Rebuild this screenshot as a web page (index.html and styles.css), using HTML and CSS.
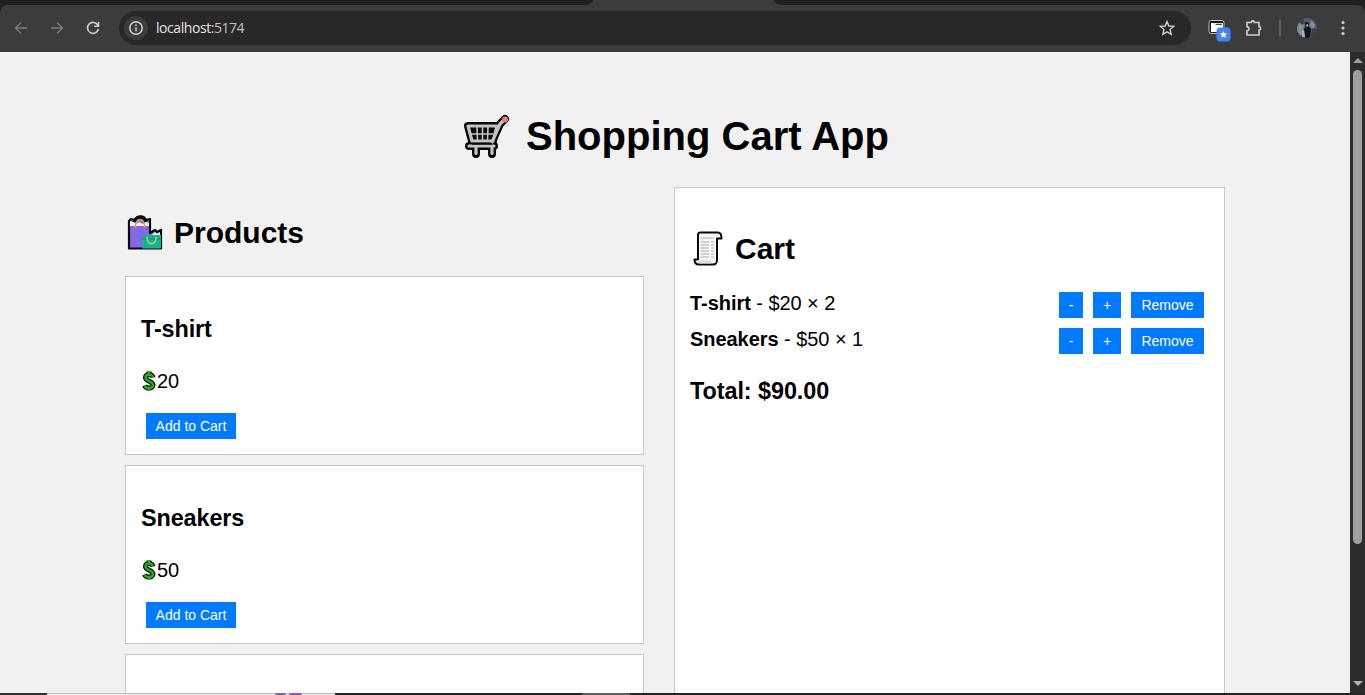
FILE: index.html
```html
<!DOCTYPE html>
<html lang="en">
<head>
<meta charset="utf-8">
<title>Shopping Cart App</title>
<link rel="stylesheet" href="styles.css">
</head>
<body>
<div class="window">
  <header class="browser">
    <div class="tabstrip"><span class="tabs-left"></span><span class="active-tab"></span><span class="tabs-right"></span></div>
    <div class="toolbar">
      <svg class="nav dim" viewBox="0 0 16 16"><path d="M14 8H2.500M8 2.500 2.500 8 8 13.500"/></svg>
      <svg class="nav dim" viewBox="0 0 16 16"><path d="M2 8h11.500M8 2.500 13.500 8 8 13.500"/></svg>
      <svg class="nav" viewBox="0 0 16 16"><path d="M13 5.500A5.500 5.500 0 1 0 13.400 9M13.500 2v4.300H9.200"/></svg>
      <div class="address">
        <span class="site-info"><svg viewBox="0 0 16 16"><circle cx="8" cy="8" r="6.200"/><path d="M8 7.300v4M8 4.500v1.600"/></svg></span>
        <span class="url">localhost<span class="port">:5174</span></span>
        <svg class="star" viewBox="0 0 16 16"><path d="M8 1.600 9.900 6l4.800.4-3.600 3.200 1.100 4.700L8 11.800l-4.200 2.500 1.100-4.700L1.300 6.400 6.100 6Z"/></svg>
      </div>
      <svg class="extension" viewBox="0 0 24 24"><rect x="1" y="4.500" width="15" height="13" rx="2" fill="#151515" stroke="#bdbdbd"/><path d="M3 7h12v9H3z" fill="#fff"/><path d="M7.500 8.300H14" stroke="#151515" stroke-width="1"/><rect x="8.500" y="11.500" width="14" height="14" rx="3.500" fill="#4285f4"/><path d="m15.500 15 1.100 2.400 2.700.2-2.100 1.800.6 2.600-2.300-1.400-2.300 1.400.6-2.600-2.100-1.800 2.700-.2z" fill="#fff"/></svg>
      <svg class="puzzle" viewBox="0 0 18 18"><path d="M2 3.500h4.200c0-2.200 3.200-2.200 3.200 0H14v4.300c2.200 0 2.200 3.200 0 3.200V16H2v-4.300c2.700-.3 2.700-3.700 0-4Z"/></svg>
      <span class="divider"></span>
      <svg class="avatar" viewBox="0 0 20 20"><defs><clipPath id="face"><circle cx="10" cy="10" r="10"/></clipPath></defs><g clip-path="url(#face)"><path fill="#596069" d="M0 0h20v20H0z"/><path fill="#858e98" d="M0 8l4-5 3 4-1 9-6 3zM14 2l4 5-2 5-3-4z"/><path fill="#3b414a" d="M1 3l5-3 2 5-3 2zM15 10l5 1v8h-6z"/><path fill="#10151f" d="M8 5c1-2 4-1 4 1l-.5 2.500L14 11l-1 9H8l-1-9 1.800-2z"/><path fill="#b0b3b5" d="M9 7l2-1 .4 2-1.600 1zM5 13l2-1 1 7H5z"/></g></svg>
      <svg class="more" viewBox="0 0 4 16"><circle cx="2" cy="2.500" r="1.600"/><circle cx="2" cy="8" r="1.600"/><circle cx="2" cy="13.500" r="1.600"/></svg>
    </div>
  </header>
  <div class="viewport">
    <main class="app">
      <h1><svg class="cart-icon" viewBox="0 0 46 46"><g fill="none" stroke-linecap="round" stroke-linejoin="round"><path d="M4 12h29l-4 15H8zM28 28 36 10l5-5M5 32h25M12 36v4M28 36v4" stroke="#080808" stroke-width="8"/><path d="M28 28 30 32" stroke="#080808" stroke-width="7"/><path d="M4 12h29l-4 15H8zM28 28 36 10l5-5M5 32h25M12 34v5.500M28 34v5.500" stroke="#c3c3c3" stroke-width="3.200"/></g><path d="M7 14h23.500l-3 11H10z" fill="#0a0a0a"/><path d="M7 20h22M13 13l.5 13M18.500 13v13M24 13l-.5 13" stroke="#c3c3c3" stroke-width="1.600"/><path d="M8 29.700h20" stroke="#080808" stroke-width="1.800"/><circle cx="41" cy="5.500" r="3" fill="#f17b6c"/></svg><span>Shopping Cart App</span></h1>
      <div class="columns">
        <section class="products">
          <h2><svg class="bags-icon" viewBox="0 0 36 36"><path d="M2 6 4 4l4 1c2-5 9-5 11 0l4-1v14l5-3 2 2 4-2v18.500H2z" fill="#8568e3" stroke="#080808" stroke-width="2.200" stroke-linejoin="round"/><path d="M7.500 7C8 .5 18 .5 18.500 7" fill="none" stroke="#080808" stroke-width="3"/><path d="M3 9V6l3 1 3 2 3-2 4 2 3-2 3 1v3H3zM24 21l4-4 2 2 3-2v5h-9z" fill="#f2f2f2"/><path d="M8.500 13C7 2 19 2 17.500 13" fill="none" stroke="#dca52d" stroke-width="1.500"/><path d="M15.500 20H34v13.500H15.500z" fill="#16b294"/><path d="M15.500 24H34" stroke="#078f7b" stroke-width="1"/><path d="M20 22c0 9 9 9 9 0" fill="none" stroke="#cfd53d" stroke-width="1.500"/></svg><span>Products</span></h2>
          <article class="card">
            <h3>T-shirt</h3>
            <p><svg class="dollar" viewBox="0 0 14 24"><path d="M7 2.500v3M7 18.500v3M11 8.500C10 4.500 3.500 4.500 3.500 8.500S11 12 11 16s-7 4-8.500.5" fill="none" stroke="#060b05" stroke-width="5"/><path d="M7 2.500v3M7 18.500v3M10.700 8C10 4.700 3.500 4.700 3.500 8.500S11 12 11 16s-7 4-8.200 1" fill="none" stroke="#25aa20" stroke-width="2.600"/></svg>20</p>
            <button class="add">Add to Cart</button>
          </article>
          <article class="card">
            <h3>Sneakers</h3>
            <p><svg class="dollar" viewBox="0 0 14 24"><path d="M7 2.500v3M7 18.500v3M11 8.500C10 4.500 3.500 4.500 3.500 8.500S11 12 11 16s-7 4-8.500.5" fill="none" stroke="#060b05" stroke-width="5"/><path d="M7 2.500v3M7 18.500v3M10.700 8C10 4.700 3.500 4.700 3.500 8.500S11 12 11 16s-7 4-8.200 1" fill="none" stroke="#25aa20" stroke-width="2.600"/></svg>50</p>
            <button class="add">Add to Cart</button>
          </article>
          <article class="card"></article>
        </section>
        <section class="cart">
          <h2><svg class="receipt" viewBox="0 0 30 36"><path d="M7 1.500h18c3 0 3.500 3 3.500 6H24v21c0 4-1 5-4 5H6c-3.500 0-4.500-2-4.500-5H5V6c0-3 0-4.500 2-4.500" fill="#f5f5f5" stroke="#080808" stroke-width="2" stroke-linejoin="round"/><path d="M8 7h13M8 11h8M18 11h3M8 14h8M18 14h3M8 17h8M18 17h3M8 20h8M18 20h3M8 23h8M18 23h3M8 26h8M18 26h3" stroke="#b0b0b0" stroke-width="1.200"/><path d="M4 29.500h14v3H7z" fill="#ddd"/></svg><span>Cart</span></h2>
          <div class="line"><span><b>T-shirt</b> - $20 × 2</span><div class="actions"><button class="minus">-</button><button class="plus">+</button><button class="remove">Remove</button></div></div>
          <div class="line"><span><b>Sneakers</b> - $50 × 1</span><div class="actions"><button class="minus">-</button><button class="plus">+</button><button class="remove">Remove</button></div></div>
          <h3 class="total">Total: $90.00</h3>
        </section>
      </div>
    </main>
    <div class="scrollbar"><i class="up"></i><i class="thumb"></i><i class="down"></i></div>
  </div>
  <footer class="taskbar"><i class="task-dark"></i><i class="status"><i class="violet"></i><i class="purple"></i></i><i class="task-gap"></i><i class="task-light"></i></footer>
</div>
</body>
</html>
```
FILE: styles.css
```css
* { box-sizing: border-box; }
body { margin: 0; overflow: hidden; font: 20px/24px "Liberation Sans", Arial, sans-serif; color: #000; }
.window { width: 1365px; height: 695px; display: flex; flex-direction: column; }
svg { display: block; flex: none; overflow: visible; }
.browser { height: 52px; flex: none; background: #202020; }
.tabstrip { height: 5px; display: flex; background: #3c3c3c; }
.tabs-left { width: 593px; background: #202020; border-bottom-right-radius: 8px 5px; }
.active-tab { width: 181px; }
.tabs-right { flex: 1; background: #202020; border-bottom-left-radius: 8px 5px; }
.toolbar { height: 47px; display: flex; align-items: center; padding: 0 0 1px 13px; background: #3c3c3c; border-radius: 8px 8px 0 0; }
.nav { width: 16px; height: 16px; margin-right: 20px; fill: none; stroke: #d0d0d0; stroke-width: 1.6; }
.nav.dim { stroke: #7b7b7b; stroke-width: 1.4; }
.address { width: 1072px; height: 34px; margin-left: -2px; border-radius: 17px; background: #282828; display: flex; align-items: center; padding: 0 16px 0 5px; }
.site-info { width: 24px; height: 24px; border-radius: 50%; background: #3c3c3c; display: grid; place-items: center; }
.site-info svg { width: 16px; fill: none; stroke: #ddd; stroke-width: 1.4; }
.url { margin-left: 8px; font: 14px/20px "Open Sans", sans-serif; letter-spacing: -.44px; color: #e3e3e3; flex: 1; }
.port { color: #c2c2c2; }
.star { width: 16px; fill: none; stroke: #d0d0d0; stroke-width: 1.4; }
.extension { width: 24px; height: 24px; margin-left: 17px; }
.puzzle { width: 18px; height: 18px; margin-left: 13px; fill: none; stroke: #d0d0d0; stroke-width: 1.6; }
.divider { width: 2px; height: 16px; margin-left: 16px; background: #606060; }
.avatar { width: 20px; height: 20px; margin-left: 16px; }
.more { width: 4px; height: 16px; margin-left: 24px; fill: #d0d0d0; }
.viewport { flex: 1; min-height: 0; display: flex; overflow: hidden; }
.app { width: 1350px; padding: 62px 125px 0; background: #f1f1f1; overflow: hidden; }
h1, h2, h3, p { margin: 0; }
h1 { height: 46px; padding-left: 339px; display: flex; align-items: center; gap: 16px; font-size: 40px; line-height: 46px; white-space: nowrap; }
h1 span { padding-bottom: 2px; }
.cart-icon { width: 46px; height: 46px; }
.columns { margin-top: 27px; display: flex; gap: 30px; }
h2 { display: flex; align-items: center; font-size: 30px; line-height: 36px; }
.products { width: 519px; padding-top: 28px; }
.products h2 { height: 36px; padding-left: 2px; gap: 11px; }
.bags-icon { width: 36px; height: 36px; }
.card { height: 179px; margin-bottom: 10px; padding: 39px 15px 15px; border: 1px solid #c8c8c8; background: #fff; }
.products h2 + .card { margin-top: 25px; }
h3 { font-size: 23.4px; line-height: 27px; }
.card h3 { letter-spacing: -.1px; }
.card p { height: 24px; margin-top: 26px; display: flex; align-items: center; }
.dollar { width: 14px; height: 24px; margin: 0 1px 0 1px; }
button { height: 26px; padding: 0; border: 0; background: #007bff; color: #fff; font: 14px/26px "Liberation Sans", Arial, sans-serif; text-align: center; }
.add { display: block; width: 90px; margin: 20px 0 0 5px; }
.cart { width: 551px; height: 510px; padding: 43px 20px 0 15px; border: 1px solid #c8c8c8; background: #fff; }
.cart h2 { height: 36px; padding-left: 3px; gap: 12px; }
.receipt { width: 30px; height: 36px; }
.line { height: 26px; display: flex; justify-content: space-between; align-items: flex-start; line-height: 23px; letter-spacing: -.05px; }
.cart h2 + .line { margin-top: 25px; }
.line + .line { margin-top: 10px; }
.actions { display: flex; gap: 10px; }
.minus { width: 24px; }
.plus { width: 28px; }
.remove { width: 73px; }
.total { margin-top: 24px; letter-spacing: -.06px; }
.scrollbar { width: 15px; background: #2c2c2c; display: flex; flex-direction: column; align-items: center; padding: 6px 0 7px; }
.scrollbar .up { border: 5px solid transparent; border-top: 0; border-bottom: 5px solid #a0a0a0; }
.thumb { width: 9px; height: 474px; margin-top: 7px; border-radius: 5px; background: #9f9f9f; }
.scrollbar .down { margin-top: auto; border: 5px solid transparent; border-bottom: 0; border-top: 5px solid #b0b0b0; }
.taskbar { height: 2px; flex: none; display: flex; background: #1d2826; }
.task-dark { width: 47px; background: #333; }
.status { width: 288px; padding-left: 228px; display: flex; gap: 3px; background: #eee; border-top: 1px solid #bbb; }
.violet, .purple { width: 11px; height: 2px; margin-top: -1px; background: #7664b5; border-radius: 4px 4px 0 0; }
.purple { width: 13px; background: #9850b8; }
.task-gap { width: 247px; }
.task-light { width: 48px; background: #59615c; }
```
